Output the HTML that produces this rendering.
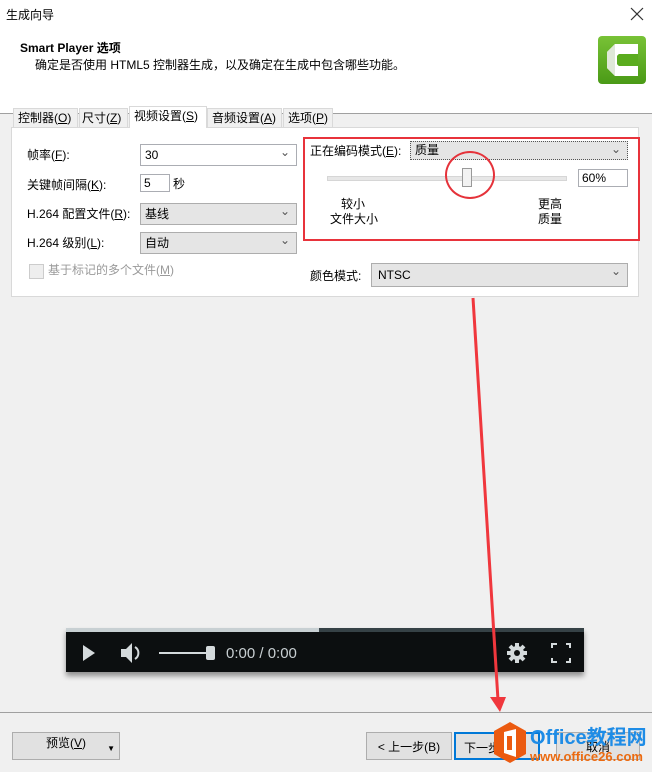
<!DOCTYPE html>
<html><head><meta charset="utf-8"><style>
body{margin:0;width:652px;height:772px;background:#f0f0f0;font-family:"Liberation Sans","Noto Sans CJK SC",sans-serif;font-size:12px;line-height:14px;color:#000;position:relative;overflow:hidden}
.a{position:absolute;white-space:nowrap}
.sel{position:absolute;background:#e5e5e5;border:1px solid #adadad;box-sizing:border-box;padding:3px 4px}
.sel.w{background:#fff;border-color:#abadb3}
.dd:after{content:"⌄";position:absolute;right:6px;top:0px;font-size:12px;color:#555}
.tab{position:absolute;top:108px;height:19px;border:1px solid #d9d9d9;border-bottom:none;background:#f0f0f0;box-sizing:border-box;padding:2px 4px;font-size:12px;white-space:nowrap;overflow:hidden}
.btn{position:absolute;border:1px solid #adadad;background:#e1e1e1;box-sizing:border-box;text-align:center;font-size:12px}
</style></head><body>
<div class="a" style="left:0;top:0;width:652px;height:113px;background:#fff;border-bottom:1px solid #a0a0a0"></div>
<div class="a" style="left:6px;top:8px;font-size:12px">生成向导</div>
<svg class="a" style="left:630px;top:7px" width="14" height="14"><path d="M1 1L13 13M13 1L1 13" stroke="#333" stroke-width="1.2"/></svg>
<div class="a" style="left:20px;top:41px;font-weight:bold;font-size:12px">Smart Player 选项</div>
<div class="a" style="left:35px;top:58px">确定是否使用 HTML5 控制器生成，以及确定在生成中包含哪些功能。</div>
<div class="a" style="left:598px;top:36px;width:48px;height:48px;border-radius:4px;background:linear-gradient(#78c236,#4a9a16)"></div>
<svg class="a" style="left:598px;top:36px" width="48" height="48"><path d="M40 8H17L9 16V32L17 40H40V30H21L19 28V20L21 18H40Z" fill="#fff"/><path d="M21 18L19 20V28L21 30H40V18Z" fill="#5aac1e"/><path d="M9 16L17 8V40L9 32Z" fill="#dfe8d8"/></svg>
<div class="tab" style="left:13px;width:65px">控制器(<u>O</u>)</div>
<div class="tab" style="left:79px;width:49px;padding:2px 2px">尺寸(<u>Z</u>)</div>
<div class="tab" style="left:129px;top:106px;height:22px;width:78px;background:#fff;z-index:2">视频设置(<u>S</u>)</div>
<div class="tab" style="left:207px;width:75px">音频设置(<u>A</u>)</div>
<div class="tab" style="left:283px;width:50px">选项(<u>P</u>)</div>
<div class="a" style="left:11px;top:127px;width:628px;height:170px;background:#fff;border:1px solid #d9d9d9;box-sizing:border-box"></div>
<div class="a" style="left:27px;top:148px">帧率(<u>F</u>):</div>
<div class="sel w dd" style="left:140px;top:144px;width:157px;height:22px">30</div>
<div class="a" style="left:27px;top:178px">关键帧间隔(<u>K</u>):</div>
<div class="sel w" style="left:140px;top:174px;width:30px;height:18px;padding:1px 3px">5</div><div class="a" style="left:173px;top:177px">秒</div>
<div class="a" style="left:27px;top:207px">H.264 配置文件(<u>R</u>):</div>
<div class="sel dd" style="left:140px;top:203px;width:157px;height:22px">基线</div>
<div class="a" style="left:27px;top:236px">H.264 级别(<u>L</u>):</div>
<div class="sel dd" style="left:140px;top:232px;width:157px;height:22px">自动</div>
<div class="a" style="left:29px;top:264px;width:13px;height:13px;border:1px solid #ccc;background:#eee"></div>
<div class="a" style="left:48px;top:263px;color:#9a9a9a">基于标记的多个文件(<u>M</u>)</div>
<div class="a" style="left:310px;top:144px">正在编码模式(<u>E</u>):</div>
<div class="sel dd" style="left:410px;top:141px;width:218px;height:19px;padding:1px 4px;border:1px dotted #555;background:#e5e5e5">质量</div>
<div class="a" style="left:327px;top:176px;width:238px;height:3px;background:#e7e7e7;border:1px solid #d6d6d6"></div>
<div class="a" style="left:462px;top:168px;width:10px;height:19px;background:#f2f2f2;border:1px solid #999;box-sizing:border-box"></div>
<div class="sel w" style="left:578px;top:169px;width:50px;height:18px;padding:1px 3px">60%</div>
<div class="a" style="left:341px;top:197px">较小</div>
<div class="a" style="left:330px;top:212px">文件大小</div>
<div class="a" style="left:538px;top:197px">更高</div>
<div class="a" style="left:538px;top:212px">质量</div>
<div class="a" style="left:303px;top:137px;width:337px;height:104px;border:2px solid #e8333b;box-sizing:border-box"></div>
<div class="a" style="left:445px;top:151px;width:50px;height:48px;border:2px solid #e5323a;border-radius:50%;box-sizing:border-box"></div>
<div class="a" style="left:310px;top:269px">颜色模式:</div>
<div class="sel dd" style="left:371px;top:263px;width:257px;height:24px;padding:4px 6px">NTSC</div>
<div class="a" style="left:0;top:712px;width:652px;height:1px;background:#a0a0a0"></div>
<div class="a" style="left:66px;top:628px;width:518px;height:44px;background:#0c0f10;box-shadow:0 4px 5px rgba(0,0,0,.4)"></div>
<div class="a" style="left:66px;top:628px;width:253px;height:4px;background:#c8d0d3"></div>
<div class="a" style="left:319px;top:628px;width:265px;height:4px;background:#364246"></div>
<svg class="a" style="left:66px;top:632px" width="518" height="40" fill="#d4dadc">
<path d="M17 13L29 21L17 29Z"/>
<path d="M55 17H60L66 11V31L60 25H55Z"/><path d="M69 15A7 7 0 0 1 69 27" stroke="#d4dadc" stroke-width="2" fill="none"/>
<rect x="93" y="20" width="48" height="2"/><rect x="140" y="14" width="9" height="14" rx="2"/>
<g stroke="#d4dadc" stroke-width="4" fill="none"><path d="M451 11V31M441 21H461M444 14L458 28M458 14L444 28"/></g>
<circle cx="451" cy="21" r="7"/><circle cx="451" cy="21" r="3" fill="#0c0f10"/>
<g stroke="#d4dadc" stroke-width="2" fill="none"><path d="M486 16V12H491M500 12H504V16M504 26V30H500M491 30H486V26"/></g>
</svg>
<div class="a" style="left:226px;top:646px;color:#c8cfd2;font-size:15px;line-height:16px">0:00 / 0:00</div>
<div class="btn" style="left:12px;top:732px;width:108px;height:28px;padding-top:3px">预览(<u>V</u>)<span style="position:absolute;right:4px;top:9px;font-size:8px">▼</span></div>
<div class="btn" style="left:366px;top:732px;width:86px;height:28px;padding-top:7px">&lt; 上一步(B)</div>
<div class="btn" style="left:454px;top:732px;width:86px;height:28px;padding-top:7px;border:2px solid #0078d7;text-align:left;padding-left:8px">下一步 &gt;</div>
<div class="btn" style="left:556px;top:732px;width:84px;height:28px;padding-top:7px">取消</div>
<svg class="a" style="left:0;top:0" width="652" height="772"><path d="M473 298L498 700" stroke="#f0373d" stroke-width="3"/><path d="M490 697L506 697L500 712Z" fill="#f0373d"/>
<path d="M510 722L526 731V754L510 763L494 754V731Z" fill="#eb5a10"/><path d="M504 732L516 729V757L504 753Z" fill="#fff"/><rect x="507" y="736" width="5" height="14" fill="#eb5a10"/></svg>
<div class="a" style="left:530px;top:727px;color:#1e8ce6;font-size:20px;line-height:22px;font-weight:bold">Office教程网</div>
<div class="a" style="left:530px;top:749px;color:#eb6a10;font-size:13px;line-height:15px;font-weight:bold">www.office26.com</div>
</body></html>
